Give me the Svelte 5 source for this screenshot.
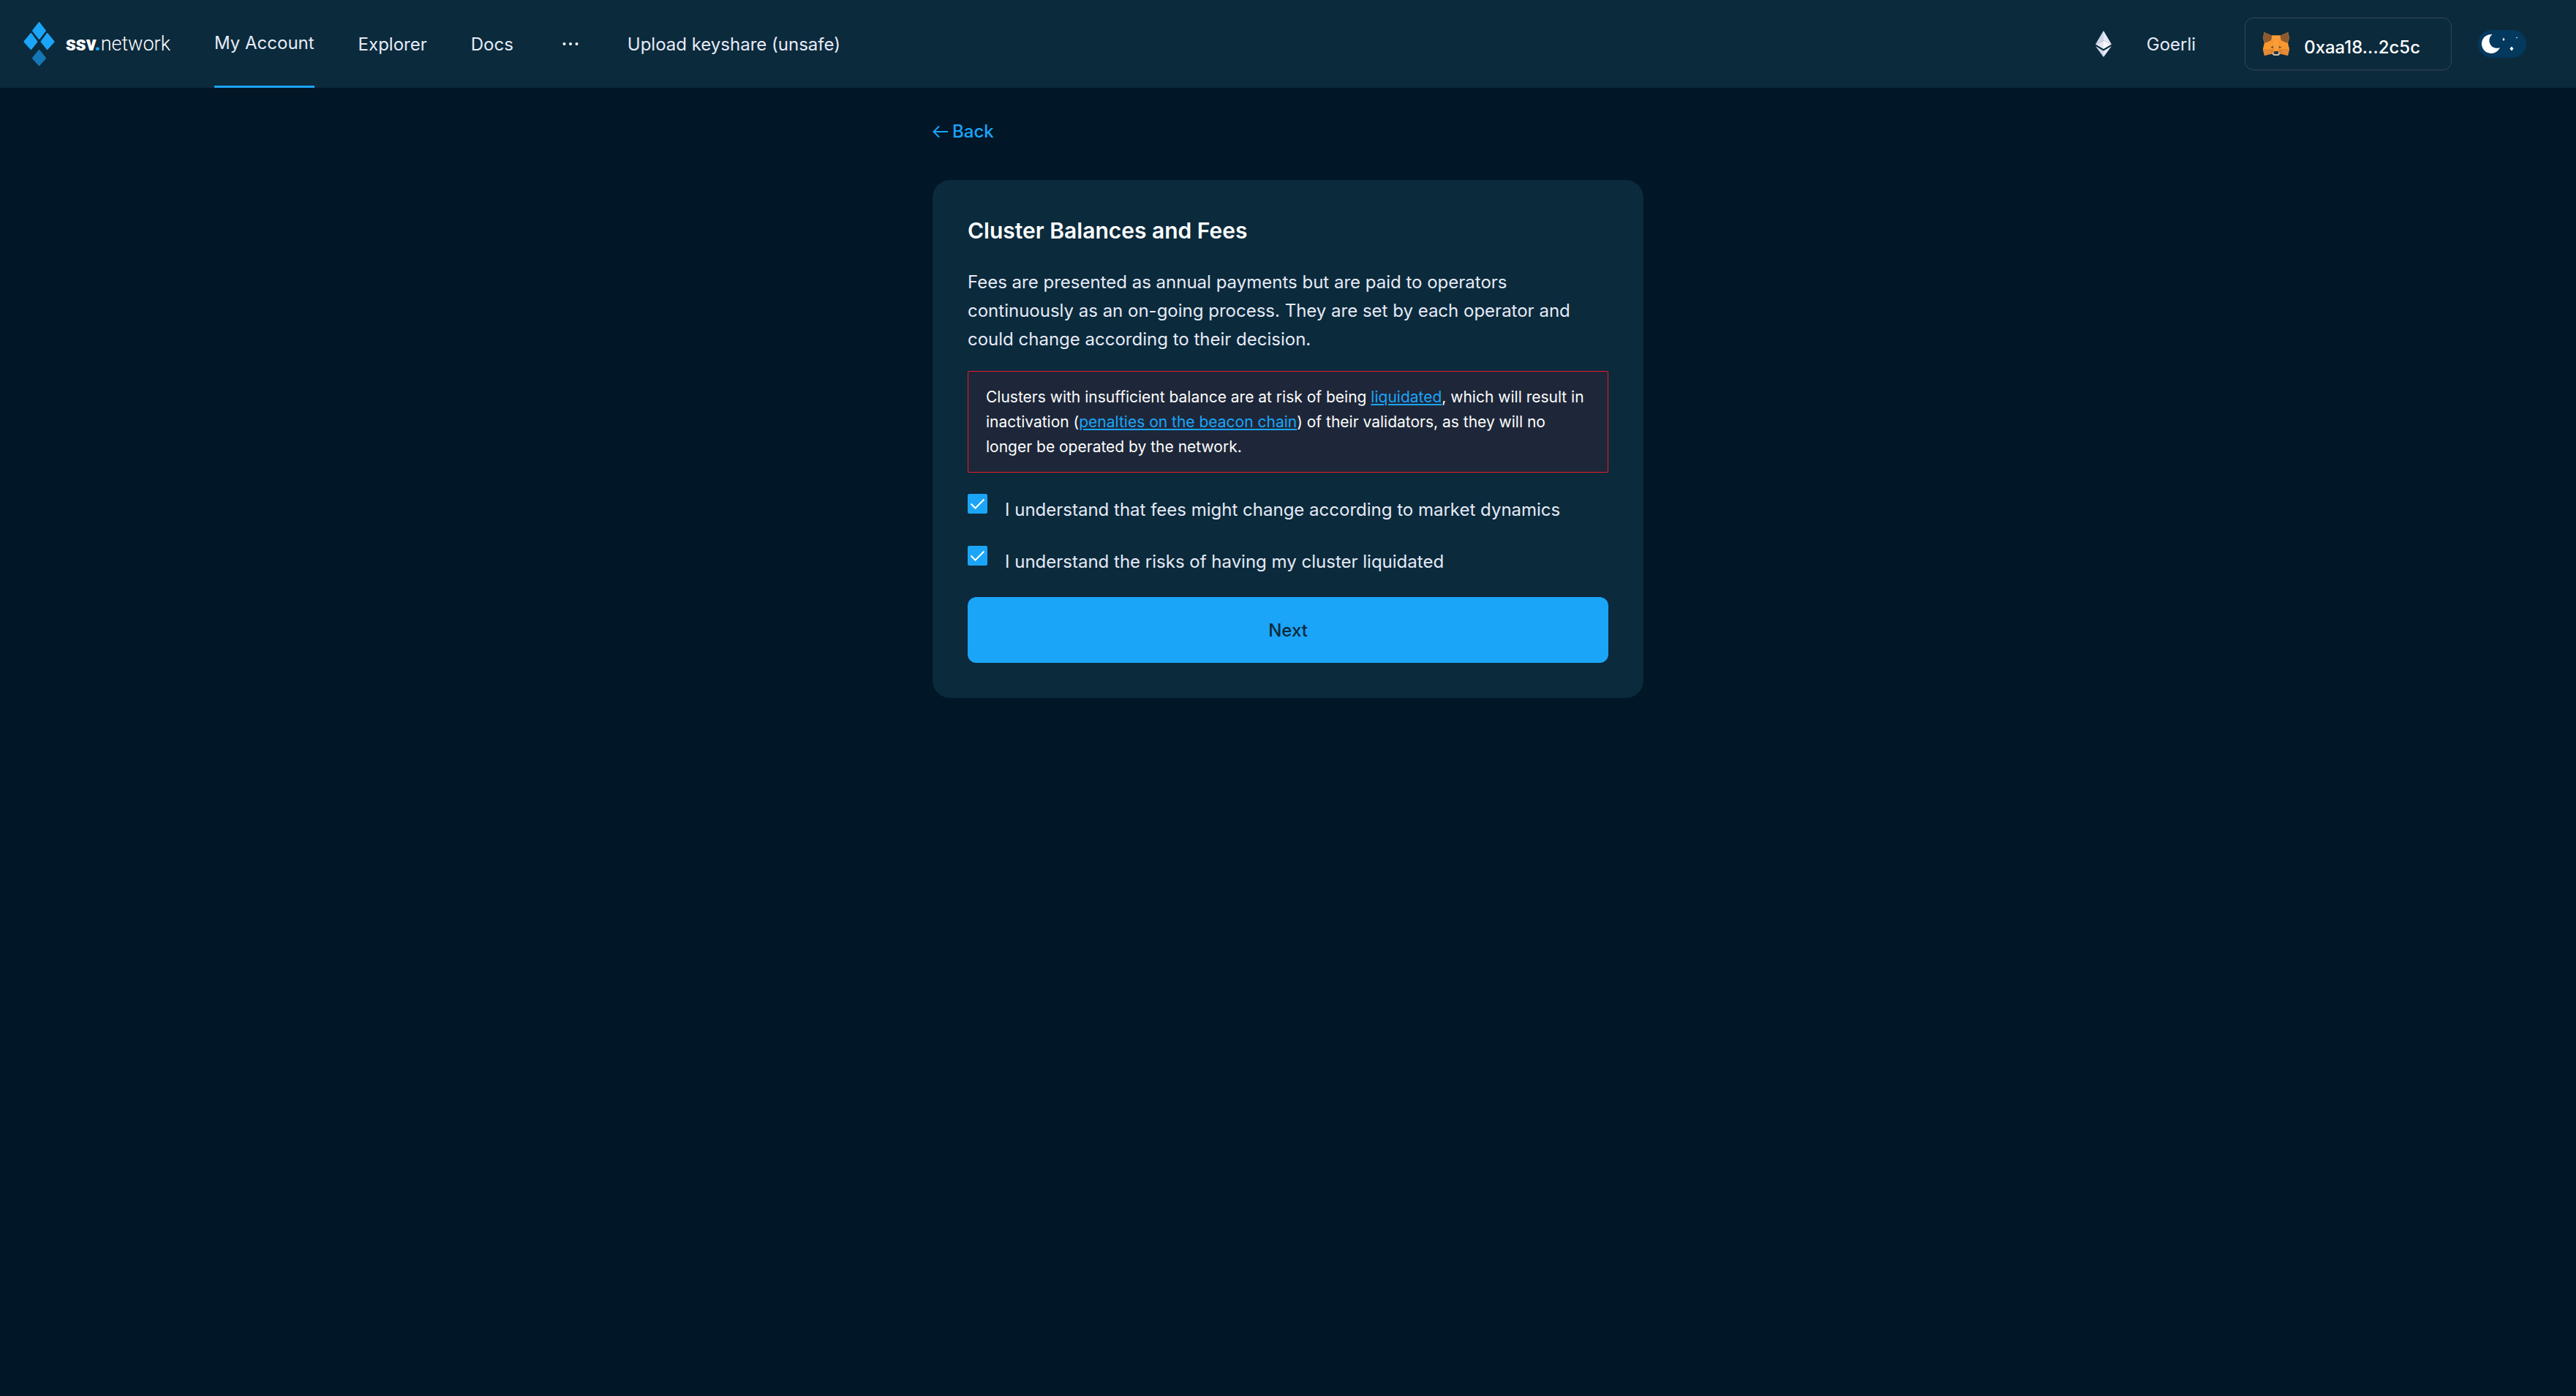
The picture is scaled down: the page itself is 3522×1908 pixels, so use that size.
<script>
  let feesAccepted = $state(true);
  let riskAccepted = $state(true);
</script>

{#snippet tick()}
  <svg class="tick" viewBox="0 0 27 27" aria-hidden="true">
    <path d="M4.500 13.500 L10.500 19.500 L22.500 7.500" fill="none" stroke="#fff" stroke-width="2" />
  </svg>
{/snippet}

<header>
  <a class="logo" href="#home" aria-label="ssv.network">
    <svg class="mark" viewBox="0 0 44 62" aria-hidden="true">
      <g fill="#1ba5f8" stroke="#1ba5f8" stroke-width="2" stroke-linejoin="round">
        <path d="M21.500 2 L30 13 L21.500 24 L13 13Z" />
        <path d="M10.500 17 L18.500 28 L10.500 38 L1.500 28Z" />
        <path d="M32.500 17 L41.500 28 L32.500 38 L24.500 28Z" />
      </g>
      <path d="M21.500 40 L30 50.500 L21.500 60 L13 50.500Z" fill="#1577b5" stroke="#1577b5" stroke-width="2" stroke-linejoin="round" />
    </svg>
    <span class="word"><b>ssv</b><i>.</i>network</span>
  </a>

  <nav>
    <a class="active" href="#account">My Account</a>
    <a href="#explorer">Explorer</a>
    <a href="#docs">Docs</a>
    <button class="more" aria-label="More">
      <svg viewBox="0 0 22 6" aria-hidden="true">
        <g fill="#fdfefe"><circle cx="2.500" cy="3" r="2" /><circle cx="11" cy="3" r="2" /><circle cx="19.500" cy="3" r="2" /></g>
      </svg>
    </button>
    <a href="#upload">Upload keyshare (unsafe)</a>
  </nav>

  <div class="right">
    <button class="network">
      <svg class="eth" viewBox="0 0 22 36" aria-hidden="true">
        <path d="M11 0 L0 18.500 L11 13.500Z" fill="#cfd6e8" />
        <path d="M11 0 L22 18.500 L11 13.500Z" fill="#e6eaf7" />
        <path d="M0 18.500 L11 13.500 V25Z" fill="#e2e6f5" />
        <path d="M22 18.500 L11 13.500 V25Z" fill="#fdfcff" />
        <path d="M0 21 L11 27.500 V36Z" fill="#cfd6e8" />
        <path d="M22 21 L11 27.500 V36Z" fill="#e9ecf9" />
      </svg>
      <span>Goerli</span>
    </button>
    <button class="wallet">
      <svg class="fox" viewBox="0 0 36 32" aria-hidden="true">
        <path d="M1.500 0 L12 4.500 H24 L34.500 0 L36 8 L34 15 L36 24 L34 32 L24 29.500 L21 32 H15 L12 29.500 L2 32 L0 24 L2 15 L0 8Z" fill="#f2912f" />
        <path d="M12 4.500 H24 L22 15 L20 25 H16 L14 15Z" fill="#fb9d36" />
        <path d="M1.500 0 L12.500 5 L11 11 L3 15 L0 8Z M34.500 0 L23.500 5 L25 11 L33 15 L36 8Z" fill="#8c5a2e" />
        <path d="M2 15 L12 12 L14 16 L13 23 H0Z M34 15 L24 12 L22 16 L23 23 H36Z" fill="#f8982f" />
        <path d="M0 23 H13 L12 29.500 L2 32Z M36 23 H23 L24 29.500 L34 32Z" fill="#e58a35" />
        <path d="M10.500 20.500 L14 19 V22Z M25.500 20.500 L22 19 V22Z" fill="#5b4a35" />
        <path d="M13 23.500 L15.500 27 L12 29.500 L9 24.500Z M23 23.500 L20.500 27 L24 29.500 L27 24.500Z" fill="#dc7f2a" />
        <path d="M12 29 L15.500 26.500 H20.500 L24 29 L21 32 H15Z" fill="#c9bcb0" />
        <path d="M15.500 26 H20.500 L21.500 29 L20 30 H16 L14.500 29Z" fill="#28343a" />
      </svg>
      <span>0xaa18...2c5c</span>
    </button>
    <button class="theme" aria-label="Toggle dark mode">
      <svg viewBox="0 0 66 38" aria-hidden="true">
        <g fill="#fff">
          <path d="M19.500 6 A13 13 0 1 0 30 24 A10.500 10.500 0 0 1 19.500 6Z" />
          <path d="M35 10.500 L36.500 13 L35 15 L33.500 13Z" />
          <path d="M53 9.500 L54 10.500 L53 11.500 L52 10.500Z" />
          <path d="M46 22.500 L48.500 25.500 L46 28.500 L43.500 25.500Z" />
        </g>
      </svg>
    </button>
  </div>
</header>

<main>
  <a class="back" href="#back">
    <svg viewBox="0 0 21 18" aria-hidden="true">
      <path d="M9 1.500 L1.500 9 L9 16.500 M1.500 9 H21" fill="none" stroke="#1ba5f8" stroke-width="2" />
    </svg>
    <span>Back</span>
  </a>

  <section class="card">
    <h1>Cluster Balances and Fees</h1>
    <p class="intro">
      Fees are presented as annual payments but are paid to operators continuously as an on-going
      process. They are set by each operator and could change according to their decision.
    </p>
    <p class="warning">
      Clusters with insufficient balance are at risk of being <a href="#liquidated">liquidated</a>,
      which will result in inactivation (<a href="#penalties">penalties on the beacon chain</a>) of
      their validators, as they will no longer be operated by the network.
    </p>
    <div class="checks">
      <label>
        <span class="box"><input type="checkbox" bind:checked={feesAccepted} />{@render tick()}</span>
        <span>I understand that fees might change according to market dynamics</span>
      </label>
      <label>
        <span class="box"><input type="checkbox" bind:checked={riskAccepted} />{@render tick()}</span>
        <span>I understand the risks of having my cluster liquidated</span>
      </label>
    </div>
    <button class="next" disabled={!feesAccepted || !riskAccepted}>Next</button>
  </section>
</main>

<style>
  :global(body) {
    background: #011627;
    color: #e6eaf7;
    font-family: Inter, "Liberation Sans", sans-serif;
    font-size: 24px;
  }

  svg {
    display: block;
    flex: none;
  }

  a {
    color: inherit;
    text-decoration: none;
  }

  button {
    font: inherit;
    color: inherit;
    background: none;
    border: 0;
    padding: 0;
    cursor: pointer;
  }

  header {
    display: flex;
    align-items: stretch;
    height: 120px;
    padding: 0 68px 0 32px;
    background: #0b2a3c;
  }

  .logo {
    display: flex;
    align-items: center;
    gap: 14px;
    margin-right: 60px;
  }

  .mark {
    width: 44px;
    height: 62px;
  }

  .word {
    color: #fff;
    font-family: Roboto, sans-serif;
    font-size: 27px;
    font-weight: 300;
  }

  .word b {
    font-weight: 900;
  }

  .word i {
    color: #1ba5f8;
    font-style: normal;
    font-weight: 900;
  }

  nav {
    display: flex;
    gap: 60px;
  }

  nav a,
  .more {
    display: flex;
    align-items: center;
  }

  .more {
    padding: 0 7px;
  }

  .more svg {
    width: 22px;
    height: 6px;
  }

  .active {
    border-bottom: 3px solid #1ba5f8;
  }

  .right {
    display: flex;
    align-items: center;
    margin-left: auto;
  }

  .network {
    display: flex;
    align-items: center;
    gap: 48px;
    margin-right: 67px;
  }

  .eth {
    width: 22px;
    height: 36px;
  }

  .wallet {
    display: flex;
    align-items: center;
    gap: 20px;
    height: 72px;
    padding: 0 42px 0 24px;
    margin-right: 36px;
    border: 1px solid #34455a;
    border-radius: 12px;
    color: #fdfefe;
    font-weight: 500;
  }

  .wallet span {
    padding-top: 8px;
  }

  .fox {
    width: 36px;
    height: 32px;
  }

  .theme {
    border-radius: 19px;
    background: #04395e;
  }

  .theme svg {
    width: 66px;
    height: 38px;
  }

  main {
    box-sizing: border-box;
    width: 100%;
    max-width: 972px;
    margin: 0 auto;
    padding: 40px 0;
  }

  .back {
    display: flex;
    align-items: center;
    gap: 6px;
    width: max-content;
    margin-bottom: 46px;
    color: #1ba5f8;
    font-weight: 500;
    line-height: 40px;
  }

  .back svg {
    width: 21px;
    height: 18px;
  }

  .card {
    padding: 48px;
    border-radius: 24px;
    background: #0b2a3c;
  }

  h1 {
    margin: 0 0 30px;
    color: #fdfefe;
    font-size: 30px;
    font-weight: 600;
    line-height: 42px;
  }

  .intro {
    margin: 0 0 24px;
    line-height: 39px;
  }

  .warning {
    margin: 0 0 29px;
    padding: 18px 24px 17px;
    border: 1px solid #ec1c26;
    border-radius: 2px;
    background: #1e2739;
    color: #fdfefe;
    font-size: 21px;
    line-height: 34px;
  }

  .warning a {
    color: #1ba5f8;
    text-decoration: underline;
  }

  .checks {
    display: grid;
    gap: 27px;
    margin-bottom: 26px;
  }

  label {
    display: flex;
    align-items: flex-start;
    gap: 24px;
    line-height: 44px;
  }

  .box {
    display: grid;
    flex: none;
  }

  .box input,
  .tick {
    grid-area: 1 / 1;
    width: 27px;
    height: 27px;
    margin: 0;
  }

  .box input {
    appearance: none;
    box-sizing: border-box;
    border: 1px solid #1ba5f8;
    border-radius: 2px;
  }

  .box input:checked {
    background: #1ba5f8;
  }

  .tick {
    visibility: hidden;
    pointer-events: none;
  }

  .box input:checked + .tick {
    visibility: visible;
  }

  .next {
    display: block;
    width: 100%;
    height: 90px;
    border-radius: 12px;
    background: #1ba5f8;
    color: #0b2a3c;
    font-weight: 500;
  }
</style>
